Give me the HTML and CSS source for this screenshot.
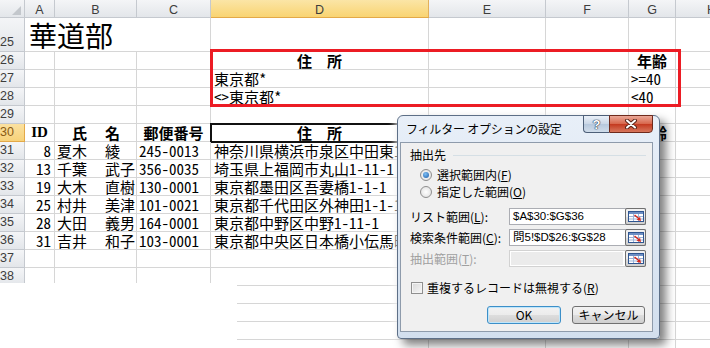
FILE: index.html
```html
<!DOCTYPE html>
<html lang="ja">
<head>
    <meta charset="UTF-8">
    <title>フィルター オプションの設定</title>
    <link rel="stylesheet" href="styles.css">
</head>
<body>

<div class="sheet">
    <!-- column headers -->
    <div class="row head">
        <div class="cell corner"><span class="corner-mark"></span></div>
        <div class="cell">A</div>
        <div class="cell">B</div>
        <div class="cell">C</div>
        <div class="cell sel">D</div>
        <div class="cell">E</div>
        <div class="cell">F</div>
        <div class="cell">G</div>
        <div class="cell">H</div>
    </div>

    <div class="row tall">
        <div class="num">25</div>
        <div class="cell title span3">華道部</div>
        <div class="cell"></div><div class="cell"></div><div class="cell"></div><div class="cell"></div><div class="cell"></div>
    </div>

    <!-- criteria range -->
    <div class="row">
        <div class="num">26</div>
        <div class="cell"></div><div class="cell"></div><div class="cell"></div>
        <div class="cell bold center">住　所</div>
        <div class="cell"></div><div class="cell"></div>
        <div class="cell bold center">年齢</div>
        <div class="cell"></div>
    </div>
    <div class="row">
        <div class="num">27</div>
        <div class="cell"></div><div class="cell"></div><div class="cell"></div>
        <div class="cell addr">東京都*</div>
        <div class="cell"></div><div class="cell"></div>
        <div class="cell">&gt;=40</div>
        <div class="cell"></div>
    </div>
    <div class="row">
        <div class="num">28</div>
        <div class="cell"></div><div class="cell"></div><div class="cell"></div>
        <div class="cell addr">&lt;&gt;東京都*</div>
        <div class="cell"></div><div class="cell"></div>
        <div class="cell">&lt;40</div>
        <div class="cell"></div>
    </div>
    <div class="row">
        <div class="num">29</div>
        <div class="cell"></div><div class="cell"></div><div class="cell"></div><div class="cell"></div>
        <div class="cell"></div><div class="cell"></div><div class="cell"></div><div class="cell"></div>
    </div>

    <!-- list range -->
    <div class="row">
        <div class="num sel">30</div>
        <div class="cell bold center serif">ID</div>
        <div class="cell bold name"><span class="name-first">氏</span><span>名</span></div>
        <div class="cell bold center">郵便番号</div>
        <div class="cell bold center active">住　所</div>
        <div class="cell"></div><div class="cell"></div>
        <div class="cell bold center">年齢</div>
        <div class="cell"></div>
    </div>
    <div class="row">
        <div class="num">31</div>
        <div class="cell right">8</div>
        <div class="cell name"><span>夏木</span><span>綾</span></div>
        <div class="cell">245-0013</div>
        <div class="cell addr">神奈川県横浜市泉区中田東1-1-1</div>
        <div class="cell"></div><div class="cell"></div><div class="cell"></div><div class="cell"></div>
    </div>
    <div class="row">
        <div class="num">32</div>
        <div class="cell right">13</div>
        <div class="cell name"><span>千葉</span><span>武子</span></div>
        <div class="cell">356-0035</div>
        <div class="cell addr">埼玉県上福岡市丸山1-11-1</div>
        <div class="cell"></div><div class="cell"></div><div class="cell"></div><div class="cell"></div>
    </div>
    <div class="row">
        <div class="num">33</div>
        <div class="cell right">19</div>
        <div class="cell name"><span>大木</span><span>直樹</span></div>
        <div class="cell">130-0001</div>
        <div class="cell addr">東京都墨田区吾妻橋1-1-1</div>
        <div class="cell"></div><div class="cell"></div><div class="cell"></div><div class="cell"></div>
    </div>
    <div class="row">
        <div class="num">34</div>
        <div class="cell right">25</div>
        <div class="cell name"><span>村井</span><span>美津</span></div>
        <div class="cell">101-0021</div>
        <div class="cell addr">東京都千代田区外神田1-1-1</div>
        <div class="cell"></div><div class="cell"></div><div class="cell"></div><div class="cell"></div>
    </div>
    <div class="row">
        <div class="num">35</div>
        <div class="cell right">28</div>
        <div class="cell name"><span>大田</span><span>義男</span></div>
        <div class="cell">164-0001</div>
        <div class="cell addr">東京都中野区中野1-11-1</div>
        <div class="cell"></div><div class="cell"></div><div class="cell"></div><div class="cell"></div>
    </div>
    <div class="row">
        <div class="num">36</div>
        <div class="cell right">31</div>
        <div class="cell name"><span>吉井</span><span>和子</span></div>
        <div class="cell">103-0001</div>
        <div class="cell addr">東京都中央区日本橋小伝馬町1-1</div>
        <div class="cell"></div><div class="cell"></div><div class="cell"></div><div class="cell"></div>
    </div>

    <div class="row">
        <div class="num">37</div>
        <div class="cell"></div><div class="cell"></div><div class="cell"></div><div class="cell"></div>
        <div class="cell"></div><div class="cell"></div><div class="cell"></div><div class="cell"></div>
    </div>
    <div class="row">
        <div class="num">38</div>
        <div class="cell"></div><div class="cell"></div><div class="cell"></div><div class="cell"></div>
        <div class="cell"></div><div class="cell"></div><div class="cell"></div><div class="cell"></div>
    </div>
    <!-- rows below are hidden behind the cut-off corner on the left -->
    <div class="row">
        <div class="num"></div>
        <div class="cell"></div><div class="cell"></div><div class="cell"></div><div class="cell"></div>
        <div class="cell"></div><div class="cell"></div><div class="cell"></div><div class="cell"></div>
    </div>
    <div class="row">
        <div class="num"></div>
        <div class="cell"></div><div class="cell"></div><div class="cell"></div><div class="cell"></div>
        <div class="cell"></div><div class="cell"></div><div class="cell"></div><div class="cell"></div>
    </div>
    <div class="row">
        <div class="num"></div>
        <div class="cell"></div><div class="cell"></div><div class="cell"></div><div class="cell"></div>
        <div class="cell"></div><div class="cell"></div><div class="cell"></div><div class="cell"></div>
    </div>
    <div class="row">
        <div class="num"></div>
        <div class="cell"></div><div class="cell"></div><div class="cell"></div><div class="cell"></div>
        <div class="cell"></div><div class="cell"></div><div class="cell"></div><div class="cell"></div>
    </div>
</div>

<!-- red frame round the criteria range -->
<div class="criteria-mark"></div>

<!-- cut-off corner of the screenshot -->
<div class="blank"></div>

<!-- Advanced filter dialog -->
<div class="dialog">
    <div class="dlg-title">
        <span class="dlg-caption">フィルター オプションの設定</span>
        <div class="cap-btns">
            <span class="cap-btn help">?</span>
            <span class="cap-btn close">
                <svg width="14" height="10" viewBox="0 0 14 10">
                    <path d="M3 1.5L11 8.5M11 1.5L3 8.5" stroke="#5a2418" stroke-width="4" stroke-linecap="round"/>
                    <path d="M3 1.5L11 8.5M11 1.5L3 8.5" stroke="#fff" stroke-width="2" stroke-linecap="round"/>
                </svg>
            </span>
        </div>
    </div>

    <div class="dlg-body">
        <div class="group-title"><span>抽出先</span><span class="group-line"></span></div>
        <div class="opt first"><span class="radio on"></span><span>選択範囲内(<u>F</u>)</span></div>
        <div class="opt"><span class="radio"></span><span>指定した範囲(<u>O</u>)</span></div>

        <div class="field first">
            <span class="field-label">リスト範囲(<u>L</u>):</span>
            <span class="field-box">
                <span class="field-text">$A$30:$G$36</span>
                <span class="ref-btn">
                    <svg width="16" height="11" viewBox="0 0 16 11">
                        <rect x="0.5" y="0.5" width="15" height="10" fill="#fff" stroke="#2f5590"/>
                        <rect x="1" y="1" width="14" height="2" fill="#6d8fc4"/>
                        <path d="M1 5.5H15M1 8H15M5.5 3V10M10.5 3V10" stroke="#9db4d8"/>
                        <path d="M7 3.5L11 7L12 5.5L13 10L8.5 8.8L10 7.8L6 4.5Z" fill="#d8261a"/>
                    </svg>
                </span>
            </span>
        </div>
        <div class="field">
            <span class="field-label">検索条件範囲(<u>C</u>):</span>
            <span class="field-box">
                <span class="field-text">問5!$D$26:$G$28</span>
                <span class="ref-btn">
                    <svg width="16" height="11" viewBox="0 0 16 11">
                        <rect x="0.5" y="0.5" width="15" height="10" fill="#fff" stroke="#2f5590"/>
                        <rect x="1" y="1" width="14" height="2" fill="#6d8fc4"/>
                        <path d="M1 5.5H15M1 8H15M5.5 3V10M10.5 3V10" stroke="#9db4d8"/>
                        <path d="M7 3.5L11 7L12 5.5L13 10L8.5 8.8L10 7.8L6 4.5Z" fill="#d8261a"/>
                    </svg>
                </span>
            </span>
        </div>
        <div class="field disabled">
            <span class="field-label">抽出範囲(<u>T</u>):</span>
            <span class="field-box">
                <span class="field-text"></span>
                <span class="ref-btn">
                    <svg width="16" height="11" viewBox="0 0 16 11">
                        <rect x="0.5" y="0.5" width="15" height="10" fill="#fff" stroke="#2f5590"/>
                        <rect x="1" y="1" width="14" height="2" fill="#6d8fc4"/>
                        <path d="M1 5.5H15M1 8H15M5.5 3V10M10.5 3V10" stroke="#9db4d8"/>
                        <path d="M7 3.5L11 7L12 5.5L13 10L8.5 8.8L10 7.8L6 4.5Z" fill="#d8261a"/>
                    </svg>
                </span>
            </span>
        </div>

        <div class="opt check-row"><span class="check"></span><span>重複するレコードは無視する(<u>R</u>)</span></div>

        <div class="dlg-buttons">
            <button class="btn default">OK</button>
            <button class="btn">キャンセル</button>
        </div>
    </div>
</div>

</body>
</html>
```

FILE: styles.css
```css
* {
    box-sizing: border-box;
}

body {
    margin: 0;
    width: 710px;
    height: 348px;
    overflow: hidden;
    position: relative;
    background-color: #ffffff;
    color: #000000;
    font-family: "Noto Sans CJK JP", sans-serif;
    text-autospace: no-autospace;
}

/* Worksheet grid */
.sheet {
    display: flex;
    flex-direction: column;
}

.row {
    display: grid;
    grid-template-columns: 25px 30px 82px 74px 218px 117px 83px 47px 72px;
    height: 18px;
    flex: none;
}

.row.tall {
    height: 34px;
}

.cell {
    border-right: 1px solid #d6d6d6;
    border-bottom: 1px solid #d6d6d6;
    padding: 0 2px;
    font-size: 15px;
    line-height: 17px;
    white-space: nowrap;
    font-feature-settings: "hwid" 1;
}

/* Column and row headers */
.head .cell,
.num {
    background: linear-gradient(#f4f5f7, #e3e6ea);
    border-right: 1px solid #c5c9cf;
    border-bottom: 1px solid #c5c9cf;
    font-family: "Liberation Sans", sans-serif;
    font-size: 12.5px;
    color: #3d3d3d;
    font-feature-settings: normal;
}

.head .cell {
    text-align: center;
    padding: 3px 0 0;
    line-height: 14px;
}

.head .cell.sel {
    background: linear-gradient(#fbe5a6, #f9d472);
    border-bottom-color: #e3a948;
    border-right-color: #e3b05a;
}

.corner {
    position: relative;
}

.corner-mark {
    position: absolute;
    right: 3px;
    bottom: 2px;
    width: 0;
    height: 0;
    border-left: 9px solid transparent;
    border-bottom: 9px solid #c3c7cc;
}

.num {
    display: flex;
    align-items: flex-end;
    line-height: 17px;
    padding-left: 0;
}

.num.sel {
    background: linear-gradient(#fbe1a0, #f7d27a);
    border-bottom-color: #e3a948;
    border-right-color: #e3a948;
    color: #8a5a12;
}

/* Cell contents */
.span3 {
    grid-column: span 3;
}

.title {
    font-size: 28px;
    line-height: 32px;
    padding-left: 4px;
    display: flex;
    align-items: flex-end;
}

.bold {
    font-weight: bold;
    font-feature-settings: normal;
}

.center {
    text-align: center;
}

.right {
    text-align: right;
    padding-right: 3px;
}

.serif {
    font-family: "Liberation Serif", serif;
}

.addr {
    padding-left: 3px;
}

.name {
    display: grid;
    grid-template-columns: 48px auto;
}

.name-first {
    padding-left: 15px;
}

.active {
    outline: 2px solid #111111;
    outline-offset: -1px;
}

/* Red frame marking the criteria range */
.criteria-mark {
    position: absolute;
    left: 210px;
    top: 49px;
    width: 471px;
    height: 58px;
    border: 3px solid #ec1c24;
}

.blank {
    position: absolute;
    left: 0;
    top: 283px;
    width: 237px;
    height: 65px;
    background-color: #ffffff;
}

/* Dialog window */
.dialog {
    position: absolute;
    left: 397px;
    top: 115px;
    width: 263px;
    height: 224px;
    border: 1px solid #5d6f87;
    border-radius: 6px 6px 4px 4px;
    background: linear-gradient(#e8eff8, #d2dfee);
    padding: 0 6px 6px 2px;
    display: flex;
    flex-direction: column;
    box-shadow: 6px 6px 10px rgba(0, 0, 0, 0.5), -3px 0 6px rgba(255, 255, 255, 0.7);
    font-size: 12px;
}

.dlg-title {
    height: 26px;
    flex: none;
    display: flex;
    align-items: flex-start;
}

.dlg-caption {
    flex: 1;
    padding: 5px 0 0 6px;
    line-height: 16px;
    letter-spacing: -0.2px;
    white-space: pre;
}

.cap-btns {
    display: flex;
    margin-top: -1px;
}

.cap-btn {
    height: 18px;
    display: flex;
    align-items: center;
    justify-content: center;
    border: 1px solid #4d5f78;
}

.help {
    width: 26px;
    border-right: none;
    border-radius: 0 0 0 4px;
    background: linear-gradient(#eaf0f8, #c9d6e6 50%, #b6c8dd 51%, #d0dcea);
    color: #ffffff;
    font-family: "Liberation Sans", sans-serif;
    font-weight: bold;
    font-size: 13px;
    text-shadow: 0 0 1px #22324a, 0 0 1px #22324a, 0 0 1px #22324a;
}

.close {
    width: 44px;
    border-radius: 0 0 4px 0;
    border-color: #6e2a1c;
    background: linear-gradient(#eaa898, #d8684d 48%, #c43a20 52%, #d7775d);
}

.dlg-body {
    flex: 1;
    background-color: #f0f0f0;
    border: 1px solid #8e9bab;
    padding: 5px 6px 0 9px;
    display: flex;
    flex-direction: column;
}

.group-title {
    height: 14px;
    display: flex;
    align-items: center;
    gap: 7px;
    line-height: 14px;
}

.group-line {
    flex: 1;
    border-top: 1px solid #d5dfe5;
}

.opt {
    height: 17px;
    display: flex;
    align-items: center;
    gap: 5px;
    margin-left: 10px;
    white-space: nowrap;
}

.opt.first {
    margin-top: 4px;
}

.radio {
    width: 12px;
    height: 12px;
    border-radius: 50%;
    border: 1px solid #8f8f8f;
    background: radial-gradient(#ffffff, #dcdcdc);
    display: flex;
    align-items: center;
    justify-content: center;
}

.radio.on::after {
    content: "";
    width: 6px;
    height: 6px;
    border-radius: 50%;
    background: radial-gradient(circle at 40% 35%, #7ec0f5, #1b5aa6);
}

.field {
    height: 17px;
    display: flex;
    align-items: center;
    margin-top: 4px;
}

.field.first {
    margin-top: 8px;
}

.field-label {
    width: 99px;
    white-space: nowrap;
}

.field-box {
    width: 137px;
    height: 17px;
    display: flex;
    border: 1px solid #abadb3;
    background-color: #ffffff;
}

.field-text {
    flex: 1;
    padding: 0 3px;
    font-family: "Liberation Sans", "Noto Sans CJK JP", sans-serif;
    font-size: 11.5px;
    line-height: 15px;
}

.ref-btn {
    width: 21px;
    margin: -1px -1px -1px 0;
    border: 1px solid #707070;
    border-radius: 2px;
    background: linear-gradient(#f2f2f2, #ebebeb 50%, #dddddd 51%, #cfcfcf);
    display: flex;
    align-items: center;
    justify-content: center;
}

.field.disabled .field-label {
    color: #a0a0a0;
}

.field.disabled .field-box {
    border-color: #d2d2d2;
}

.field.disabled .field-text {
    background-color: #ebebeb;
    margin: 1px 2px 1px 1px;
}

.check-row {
    margin-left: 1px;
    margin-top: 12px;
    gap: 4px;
}

.check {
    width: 12px;
    height: 12px;
    border: 1px solid #8f8f8f;
    background: linear-gradient(135deg, #d8d8d8, #f7f7f7);
    box-shadow: inset 0 0 0 1px #f4f4f4;
}

.dlg-buttons {
    display: flex;
    justify-content: flex-end;
    gap: 11px;
    margin-top: 10px;
    padding-right: 1px;
}

.btn {
    width: 73px;
    height: 18px;
    padding: 0;
    border: 1px solid #707070;
    border-radius: 3px;
    background: linear-gradient(#f2f2f2, #ebebeb 50%, #dddddd 51%, #cfcfcf);
    font-family: "Noto Sans CJK JP", sans-serif;
    font-size: 12px;
    line-height: 16px;
    color: #000000;
}

.btn.default {
    width: 74px;
    border-color: #3c8fc8;
    box-shadow: inset 0 0 0 1px #bfe6fb;
}
```
